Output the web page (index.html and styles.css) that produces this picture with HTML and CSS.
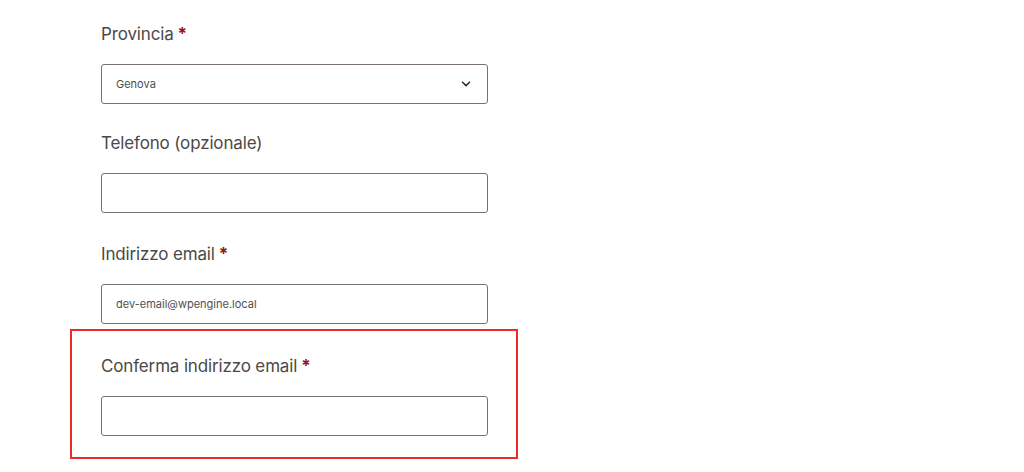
FILE: index.html
```html
<!DOCTYPE html>
<html lang="it">
<head>
<meta charset="utf-8">
<title>Checkout</title>
<link rel="stylesheet" href="styles.css">
</head>
<body>
<form class="form">
  <div class="field f1">
    <label class="label">Provincia<abbr class="req">*</abbr></label>
    <div class="control select">
      <span class="value">Genova</span>
      <svg class="chev" width="10" height="6" viewBox="0 0 10 6"><path d="M1.5 1.2 L5 4.6 L8.5 1.2" fill="none" stroke="#333" stroke-width="1.6" stroke-linecap="round" stroke-linejoin="round"/></svg>
    </div>
  </div>
  <div class="field">
    <label class="label">Telefono (opzionale)</label>
    <div class="control"></div>
  </div>
  <div class="field">
    <label class="label">Indirizzo email<abbr class="req">*</abbr></label>
    <div class="control"><span class="value">dev-email@wpengine.local</span></div>
  </div>
  <div class="highlight">
    <div class="field last">
      <label class="label">Conferma indirizzo email<abbr class="req">*</abbr></label>
      <div class="control"></div>
    </div>
  </div>
</form>
</body>
</html>
```
FILE: styles.css
```css
html, body {
  margin: 0;
  padding: 0;
  background: #fff;
}
body {
  font-family: Inter, "Noto Sans", sans-serif;
  color: #4a4644;
}
.form {
  padding: 22px 0 0 101px;
  width: 387px;
}
.field {
  display: flex;
  flex-direction: column;
  gap: 18px;
  margin-bottom: 29px;
}
.field.f1 {
  margin-bottom: 27px;
}
.field.last {
  margin-bottom: 0;
}
.label {
  font-size: 17px;
  line-height: 24px;
  height: 24px;
  color: #4d4846;
  font-weight: 400;
  letter-spacing: -0.15px;
}
.req {
  color: #a0100f;
  text-decoration: none;
  font-weight: 700;
  font-size: 17px;
  margin-left: 4px;
}
.control {
  box-sizing: border-box;
  height: 40px;
  width: 387px;
  border: 1px solid #7a706c;
  border-radius: 3px;
  display: flex;
  align-items: center;
  padding: 0 14px;
}
.value {
  font-size: 11px;
  color: #4f4f4f;
}
.select {
  justify-content: space-between;
}
.chev {
  margin-right: 2px;
}
.highlight {
  margin: -24px 0 0 -31px;
  width: 448px;
  box-sizing: border-box;
  border: 2px solid #ec2a2a;
  padding: 23px 29px 21px 29px;
}
```
